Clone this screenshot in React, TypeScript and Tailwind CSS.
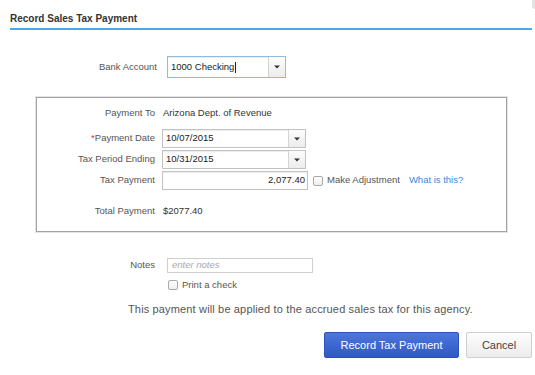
import React from "react";

const Arrow = () => (
  <div className="flex h-full w-[17px] items-center justify-center border-l border-[#d4d4d4] bg-gradient-to-b from-[#fdfdfd] to-[#ececec]">
    <svg width="6" height="4" viewBox="0 0 6 4">
      <path d="M0 0.5 L6 0.5 L3 3.5 Z" fill="#333" />
    </svg>
  </div>
);

const Check = () => (
  <div className="h-[10px] w-[10px] rounded-[2px] border border-[#a9a9a9] bg-gradient-to-b from-white to-[#eeeeee]" />
);

const Label = ({ children }: { children: React.ReactNode }) => (
  <div className="w-[118px] shrink-0 text-right">{children}</div>
);

const App = () => {
  return (
    <div className="relative h-[375px] w-[535px] overflow-hidden bg-white font-['Liberation_Sans',Arial,sans-serif] text-[9.5px] text-[#555]">
      <div className="absolute right-0 top-0 h-[9px] w-[3px] rounded-bl-[3px] bg-[#e2e2e2]" />
      {/* HEADER */}
      <div className="ml-[10px] mr-[3px] border-b-[2px] border-[#45aaf2] pb-[4px] pt-[13px]">
        <h1 className="text-[10px] font-bold leading-[11px] text-[#333]">
          Record Sales Tax Payment
        </h1>
      </div>

      {/* BANK ACCOUNT */}
      <div className="mt-[26px] flex items-center">
        <div className="w-[157px] text-right">Bank Account</div>
        <div className="ml-[10px] flex h-[22px] w-[119px] items-center border border-[#8fbbe3] bg-white shadow-[inset_0_1px_1px_rgba(0,0,0,0.08)]">
          <div className="flex flex-1 items-center pl-[3px] text-[#222]">
            1000 Checking<span className="ml-[1px] h-[11px] w-px bg-[#222]" />
          </div>
          <Arrow />
        </div>
      </div>

      {/* PAYMENT BOX */}
      <div className="ml-[36px] mt-[19px] h-[135px] w-[471px] border border-[#a3a3a3] pt-[7px] shadow-[0_0_0_1px_#e4e4e4]">
        <div className="flex h-[16px] items-center">
          <Label>Payment To</Label>
          <div className="ml-[8px] text-[#333]">Arizona Dept. of Revenue</div>
        </div>
        <div className="mt-[8px] flex h-[19px] items-center">
          <Label>
            <span className="text-[#d33]">*</span>Payment Date
          </Label>
          <div className="ml-[7px] flex h-[19px] w-[144px] items-center border border-[#c2c2c2] shadow-[inset_0_1px_1px_rgba(0,0,0,0.08)]">
            <div className="flex-1 pl-[3px] text-[#222]">10/07/2015</div>
            <Arrow />
          </div>
        </div>
        <div className="mt-[2px] flex h-[19px] items-center">
          <Label>Tax Period Ending</Label>
          <div className="ml-[7px] flex h-[19px] w-[144px] items-center border border-[#c2c2c2] shadow-[inset_0_1px_1px_rgba(0,0,0,0.08)]">
            <div className="flex-1 pl-[3px] text-[#222]">10/31/2015</div>
            <Arrow />
          </div>
        </div>
        <div className="mt-[2px] flex h-[19px] items-center">
          <Label>Tax Payment</Label>
          <div className="ml-[7px] flex h-[19px] w-[146px] items-center justify-end border border-[#c2c2c2] pr-[2px] text-[#222] shadow-[inset_0_1px_1px_rgba(0,0,0,0.08)]">
            2,077.40
          </div>
          <div className="ml-[5px]">
            <Check />
          </div>
          <div className="ml-[4px]">Make Adjustment</div>
          <div className="ml-[9px] text-[#3a8ad8]">What is this?</div>
        </div>
        <div className="mt-[13px] flex h-[16px] items-center">
          <Label>Total Payment</Label>
          <div className="ml-[8px] text-[#333]">$2077.40</div>
        </div>
      </div>

      {/* NOTES */}
      <div className="mt-[26px] flex items-center">
        <div className="w-[155px] text-right">Notes</div>
        <div className="ml-[12px] flex h-[15px] w-[146px] items-center border border-[#cfcfcf] pl-[4px] italic text-[#aaa]">
          enter notes
        </div>
      </div>
      <div className="ml-[168px] mt-[5px] flex items-center">
        <Check />
        <div className="ml-[4px]">Print a check</div>
      </div>
      <div className="mt-[10px] pl-[128px] text-[11px] leading-[14px] tracking-[0.15px]">
        This payment will be applied to the accrued sales tax for this agency.
      </div>

      {/* BUTTONS */}
      <div className="mr-[3px] mt-[16px] flex justify-end gap-[7px]">
        <button className="h-[26px] w-[135px] rounded-[2px] border border-[#2c52b8] bg-gradient-to-b from-[#4d77dc] to-[#2f58c4] text-[11px] text-white">
          Record Tax Payment
        </button>
        <button className="h-[26px] w-[66px] rounded-[2px] border border-[#cfcfcf] bg-gradient-to-b from-[#fdfdfd] to-[#ececec] text-[11px] text-[#444]">
          Cancel
        </button>
      </div>
    </div>
  );
};

export default App;
